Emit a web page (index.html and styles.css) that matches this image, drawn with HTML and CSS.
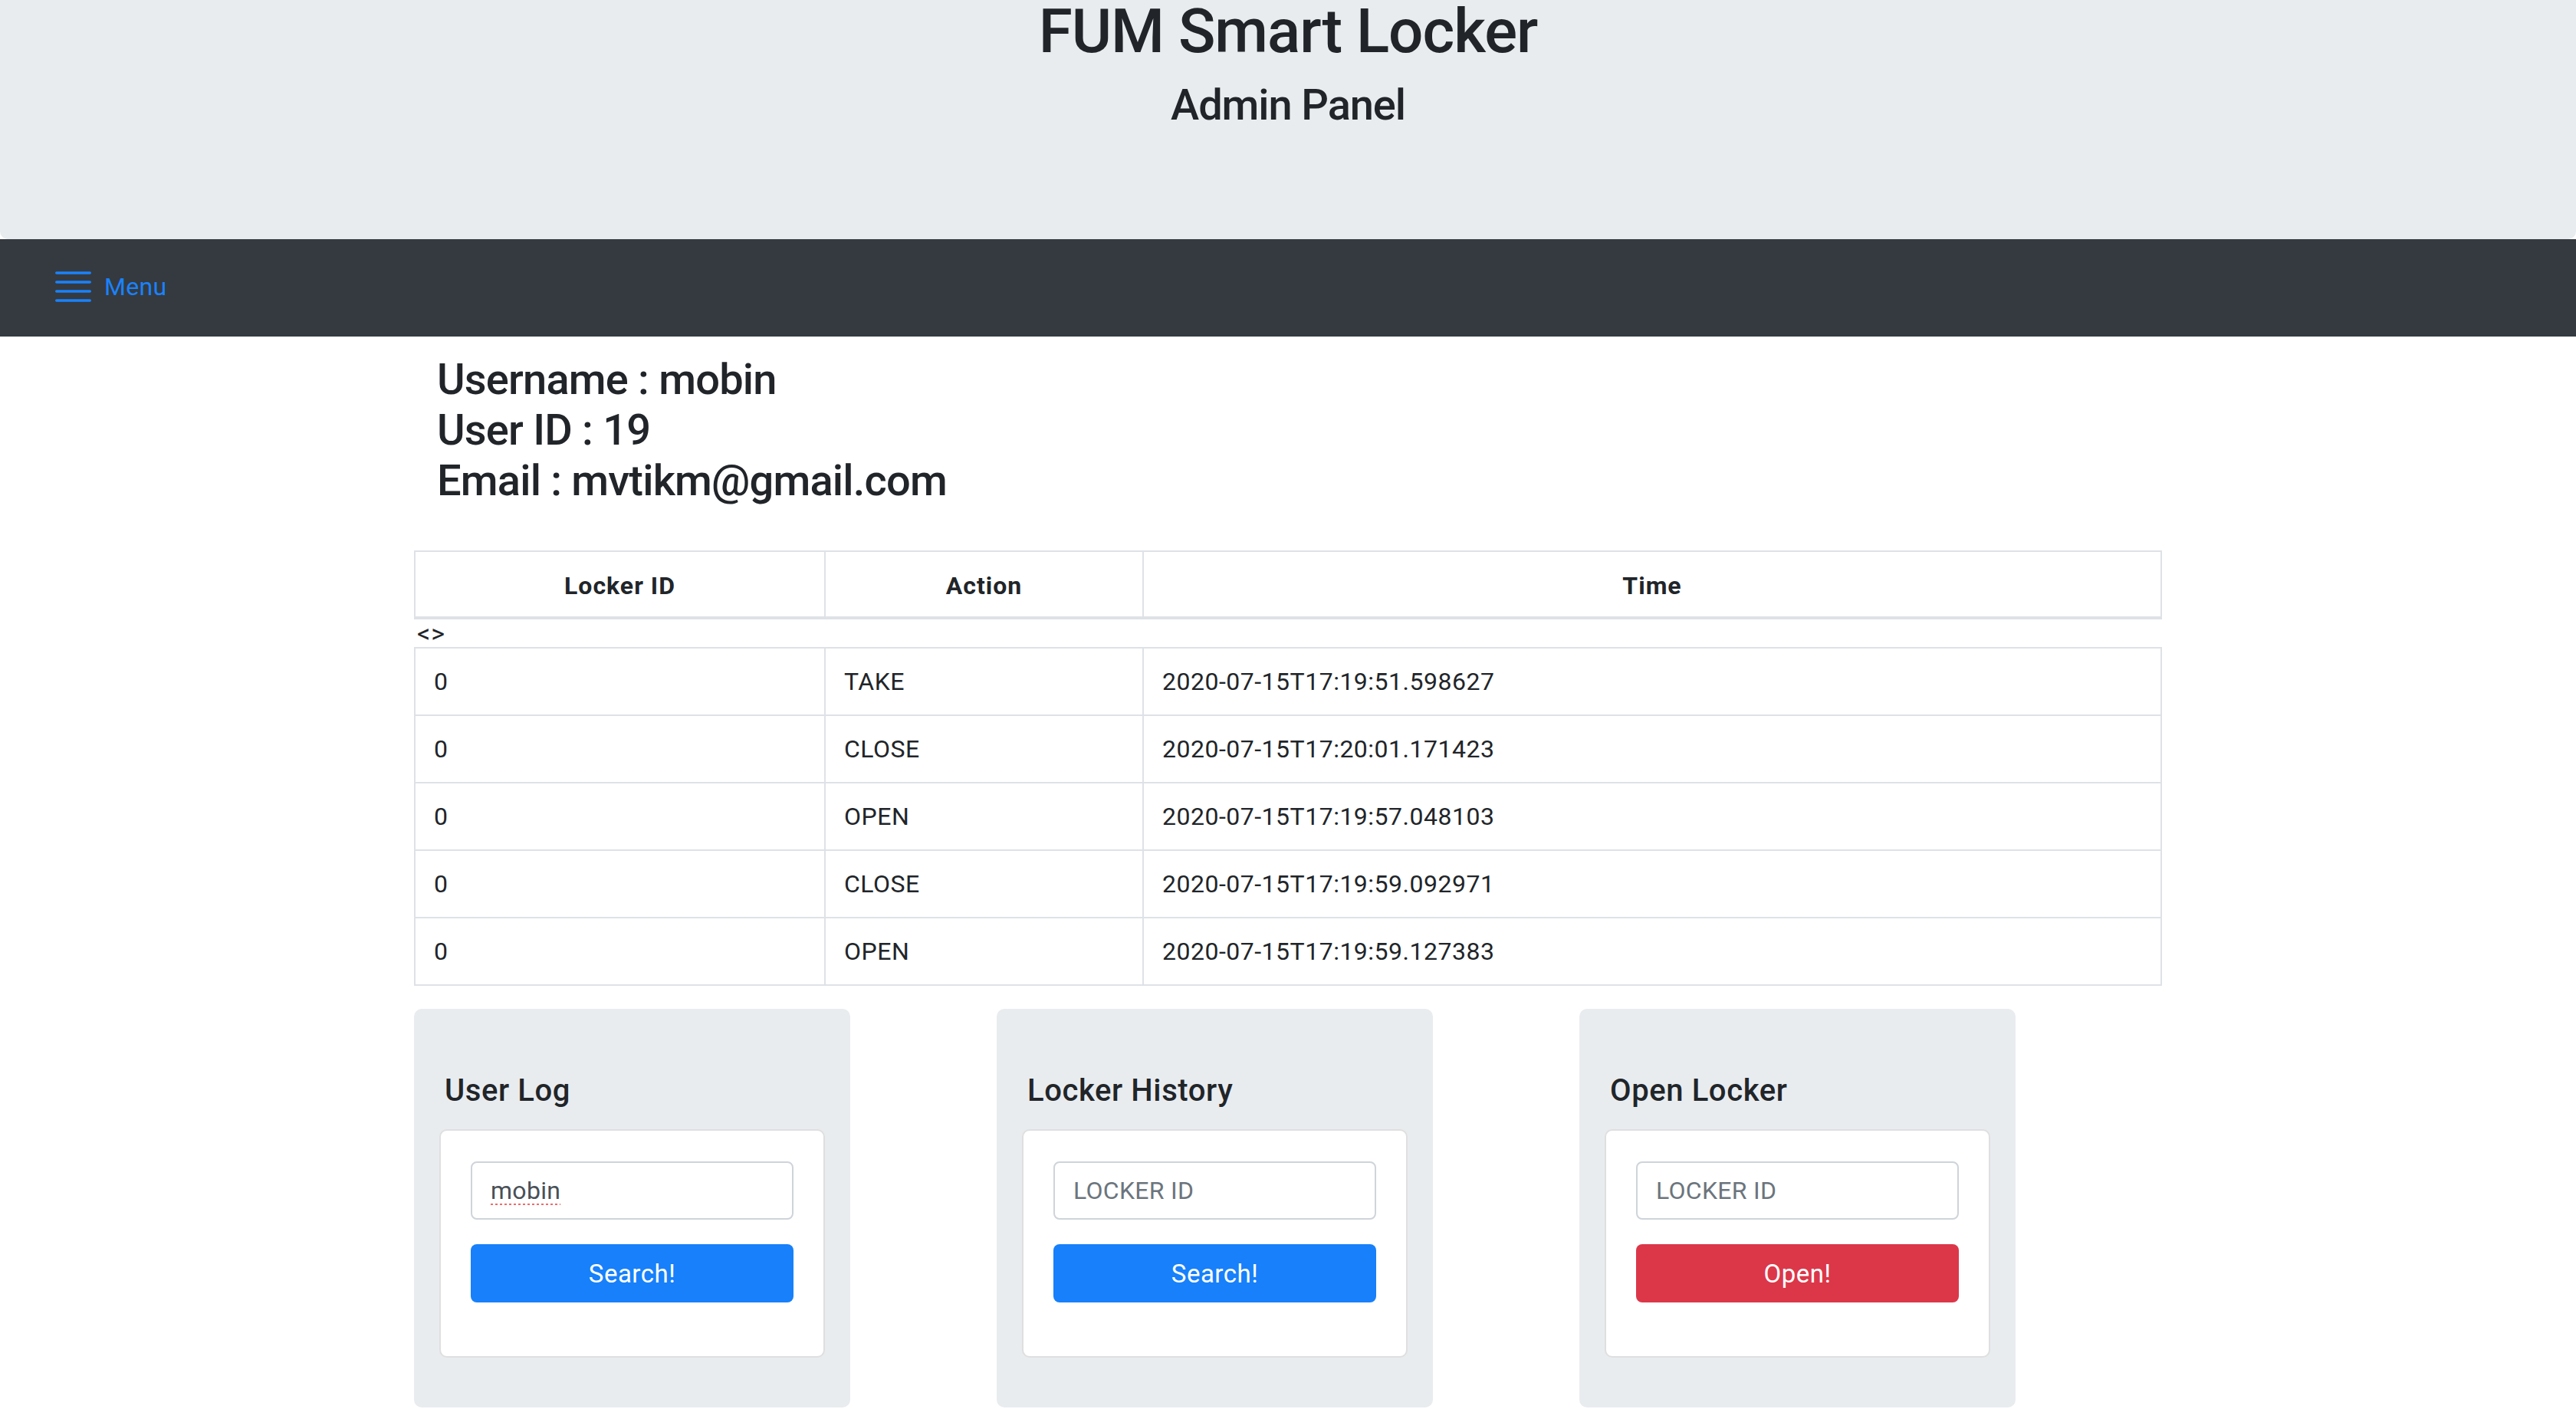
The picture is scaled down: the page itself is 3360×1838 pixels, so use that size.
FILE: index.html
```html
<!DOCTYPE html>
<html lang="en">
<head>
<meta charset="utf-8">
<title>FUM Smart Locker - Admin Panel</title>
<link rel="stylesheet" href="styles.css">
</head>
<body>
<header class="jumbotron">
  <h1 class="title">FUM Smart Locker</h1>
  <h2 class="subtitle">Admin Panel</h2>
</header>
<nav class="navbar">
  <button class="menu-btn" type="button">
    <svg class="menu-icon" width="48" height="40" viewBox="0 0 48 40" aria-hidden="true">
      <g stroke="currentColor" stroke-width="3.6" stroke-linecap="round">
        <line x1="1.8" y1="2" x2="45.2" y2="2"/>
        <line x1="1.8" y1="14" x2="45.2" y2="14"/>
        <line x1="1.8" y1="26" x2="45.2" y2="26"/>
        <line x1="1.8" y1="38" x2="45.2" y2="38"/>
      </g>
    </svg>
    <span class="menu-label">Menu</span>
  </button>
</nav>
<main class="container">
  <div class="user-info">
    <h3 class="info-line">Username : mobin</h3>
    <h3 class="info-line">User ID : 19</h3>
    <h3 class="info-line">Email : mvtikm@gmail.com</h3>
  </div>

  <table class="log-table log-head">
    <thead>
      <tr>
        <th class="c-id">Locker ID</th>
        <th class="c-action">Action</th>
        <th class="c-time">Time</th>
      </tr>
    </thead>
  </table>
  <div class="stray">&lt;&gt;</div>
  <table class="log-table log-body">
    <tbody>
      <tr><td class="c-id">0</td><td class="c-action">TAKE</td><td class="c-time">2020-07-15T17:19:51.598627</td></tr>
      <tr><td class="c-id">0</td><td class="c-action">CLOSE</td><td class="c-time">2020-07-15T17:20:01.171423</td></tr>
      <tr><td class="c-id">0</td><td class="c-action">OPEN</td><td class="c-time">2020-07-15T17:19:57.048103</td></tr>
      <tr><td class="c-id">0</td><td class="c-action">CLOSE</td><td class="c-time">2020-07-15T17:19:59.092971</td></tr>
      <tr><td class="c-id">0</td><td class="c-action">OPEN</td><td class="c-time">2020-07-15T17:19:59.127383</td></tr>
    </tbody>
  </table>

  <section class="tools">
    <div class="tool">
      <h5 class="tool-title">User Log</h5>
      <form class="card">
        <input class="field field-filled" type="text" value="mobin">
        <button class="btn btn-primary" type="button">Search!</button>
      </form>
    </div>
    <div class="tool">
      <h5 class="tool-title">Locker History</h5>
      <form class="card">
        <input class="field" type="text" placeholder="LOCKER ID">
        <button class="btn btn-primary" type="button">Search!</button>
      </form>
    </div>
    <div class="tool">
      <h5 class="tool-title">Open Locker</h5>
      <form class="card">
        <input class="field" type="text" placeholder="LOCKER ID">
        <button class="btn btn-danger" type="button">Open!</button>
      </form>
    </div>
  </section>
</main>
</body>
</html>
```

FILE: styles.css
```css
* {
  box-sizing: border-box;
}

body {
  margin: 0;
  background: #ffffff;
  color: #212529;
  font-family: Roboto, "Noto Sans", "Liberation Sans", sans-serif;
}

/* ---------- header ---------- */
.jumbotron {
  height: 312px;
  background: #e9ecef;
  border-radius: 0 0 10px 10px;
  text-align: center;
  padding-top: 1px;
}

.title {
  margin: 0;
  font-size: 80px;
  line-height: 80px;
  font-weight: 500;
  letter-spacing: -1px;
}

.subtitle {
  margin: 28px 0 0;
  font-size: 56px;
  line-height: 56px;
  font-weight: 500;
  letter-spacing: -1.1px;
}

/* ---------- navbar ---------- */
.navbar {
  height: 127px;
  background: #343a40;
  display: flex;
  align-items: center;
  padding-left: 72px;
  padding-bottom: 3px;
}

.menu-btn {
  display: flex;
  align-items: center;
  gap: 16px;
  background: none;
  border: none;
  padding: 0;
  color: #1a82fb;
  font-family: inherit;
  cursor: pointer;
}

.menu-icon {
  display: block;
}

.menu-label {
  font-size: 32px;
  line-height: 40px;
  letter-spacing: 0.3px;
}

/* ---------- main ---------- */
.container {
  width: 2280px;
  margin: 0 auto;
}

.user-info {
  padding-left: 30px;
  margin-top: 23px;
}

.info-line {
  margin: 0;
  font-size: 56px;
  line-height: 66px;
  font-weight: 500;
  letter-spacing: -0.8px;
}

/* ---------- table ---------- */
.log-table {
  width: 100%;
  border-collapse: separate;
  border-spacing: 0;
  border-left: 2px solid #dee2e6;
  border-top: 2px solid #dee2e6;
  font-size: 32px;
}

.log-head {
  margin-top: 58px;
}

.log-table th,
.log-table td {
  border-right: 2px solid #dee2e6;
  border-bottom: 2px solid #dee2e6;
  line-height: 38px;
  vertical-align: middle;
}

.log-table th {
  border-bottom-width: 4px;
  padding: 25px 24px 21px;
  font-weight: 700;
  text-align: center;
  letter-spacing: 1px;
}

.log-table td {
  padding: 24px;
  text-align: left;
  font-weight: 400;
  letter-spacing: 0.5px;
}

.c-id {
  width: 535px;
}

.c-action {
  width: 415px;
}

.stray {
  height: 36px;
  line-height: 36px;
  padding-left: 4px;
  font-size: 34px;
  letter-spacing: 1px;
}

/* ---------- tools ---------- */
.tools {
  margin-top: 30px;
  display: grid;
  grid-template-columns: repeat(3, 569px);
  column-gap: 191px;
}

.tool {
  background: #e9ecef;
  border-radius: 10px;
  padding: 83px 33px 65px;
}

.tool-title {
  margin: 0 0 26px;
  padding-left: 7px;
  font-size: 40px;
  line-height: 48px;
  font-weight: 500;
  letter-spacing: 0.6px;
}

.card {
  margin: 0;
  background: #ffffff;
  border: 2px solid rgba(0, 0, 0, 0.125);
  border-radius: 10px;
  padding: 40px 39px 70px;
  display: flex;
  flex-direction: column;
  gap: 32px;
}

.field {
  width: 100%;
  height: 76px;
  border: 2px solid #ced4da;
  border-radius: 8px;
  padding: 0 24px;
  font-family: inherit;
  font-size: 32px;
  letter-spacing: 0.3px;
  color: #495057;
  background: #ffffff;
  outline: none;
}

.field::placeholder {
  color: #6c757d;
  opacity: 1;
}

.field-filled {
  text-decoration: underline dotted #f06a6a;
  text-decoration-thickness: 3px;
  text-underline-offset: 6px;
}

.btn {
  height: 76px;
  border: none;
  border-radius: 8px;
  font-family: inherit;
  font-size: 33px;
  letter-spacing: 0.5px;
  color: #ffffff;
  cursor: pointer;
}

.btn-primary {
  background: #1780fa;
}

.btn-danger {
  background: #db3749;
}
```
